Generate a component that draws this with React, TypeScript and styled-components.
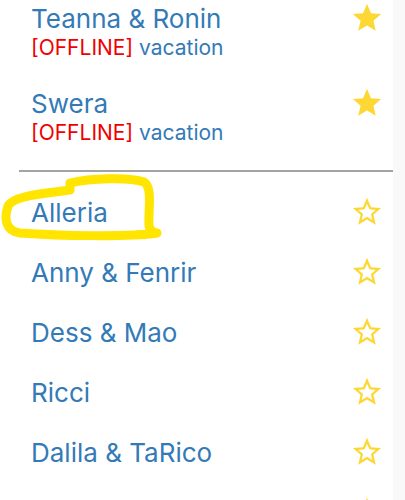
import React from 'react'
import styled, { createGlobalStyle } from 'styled-components'

const Global = createGlobalStyle`
    html, body {
        margin: 0;
        padding: 0;
        background: #fff;
        overflow: hidden;
    }
    body {
        font-family: Inter, "Noto Sans", sans-serif;
    }
`

const Page = styled.div`
    display: flex;
    width: 405px;
    height: 500px;
    overflow: hidden;
    position: relative;
`

const Scroller = styled.div`
    width: 393px;
    flex: none;
`

const List = styled.div`
    margin-top: -10px;
`

const Row = styled.div<{ $two?: boolean }>`
    display: flex;
    align-items: flex-start;
    padding: ${p => (p.$two ? '14px 9px 14px 31px' : '15px 9px 15px 31px')};
`

const Info = styled.div`
    flex: 1;
    display: flex;
    flex-direction: column;
`

const Name = styled.div`
    font-size: 26px;
    line-height: 30px;
    height: 30px;
    color: #337ab7;
    white-space: nowrap;
`

const Status = styled.div`
    font-size: 21px;
    line-height: 27px;
    color: #337ab7;
    white-space: nowrap;
`

const Offline = styled.span`
    color: #f00000;
`

const StarBox = styled.div`
    height: 30px;
    display: flex;
    align-items: center;
    svg {
        width: 34px;
        height: 34px;
        margin-top: -3px;
        fill: #fdd835;
    }
`

const Divider = styled.hr`
    border: none;
    height: 2px;
    background: #a3a3a3;
    margin: 10px 0 11px 19px;
`

const Track = styled.div`
    flex: 1;
    background: #f9f9f9;
`

const Scribble = styled.svg`
    position: absolute;
    left: 0;
    top: 0;
    pointer-events: none;
`

const FULL = 'M12 17.27L18.18 21l-1.64-7.03L22 9.24l-7.19-.61L12 2 9.19 8.63 2 9.24l5.46 4.73L5.82 21z'
const EMPTY =
    'M22 9.24l-7.19-.62L12 2 9.19 8.63 2 9.24l5.46 4.73L5.82 21 12 17.27 18.18 21l-1.63-7.03L22 9.24zM12 15.4l-3.76 2.27 1-4.28-3.32-2.88 4.38-.38L12 6.1l1.71 4.04 4.38.38-3.32 2.88 1 4.28L12 15.4z'

const Star = ({ on }: { on?: boolean }) => (
    <StarBox>
        <svg viewBox="0 0 24 24">
            <path d={on ? FULL : EMPTY} />
        </svg>
    </StarBox>
)

const favs = ['Teanna & Ronin', 'Swera']
// last one is scrolled below the fold, only its star peeks in
const others = ['Alleria', 'Anny & Fenrir', 'Dess & Mao', 'Ricci', 'Dalila & TaRico', '']

export default () => (
    <Page>
        <Global />
        <Scroller>
            <List>
                {favs.map(n => (
                    <Row $two key={n}>
                        <Info>
                            <Name>{n}</Name>
                            <Status>
                                <Offline>[OFFLINE]</Offline> vacation
                            </Status>
                        </Info>
                        <Star on />
                    </Row>
                ))}
                <Divider />
                {others.map((n, i) => (
                    <Row key={i}>
                        <Info>
                            <Name>{n}</Name>
                        </Info>
                        <Star />
                    </Row>
                ))}
            </List>
        </Scroller>
        <Track />
        <Scribble width="405" height="500">
            <path
                d="M157 233 C130 237, 60 236, 20 233 C5 231, 4 218, 8 206 C13 196, 45 193, 70 190 L70 183 C90 178, 130 177, 144 182 C153 188, 148 210, 149 226 C150 231, 155 233, 157 233"
                fill="none"
                stroke="#ffe500"
                strokeWidth="9"
                strokeLinecap="round"
                strokeLinejoin="round"
            />
        </Scribble>
    </Page>
)
